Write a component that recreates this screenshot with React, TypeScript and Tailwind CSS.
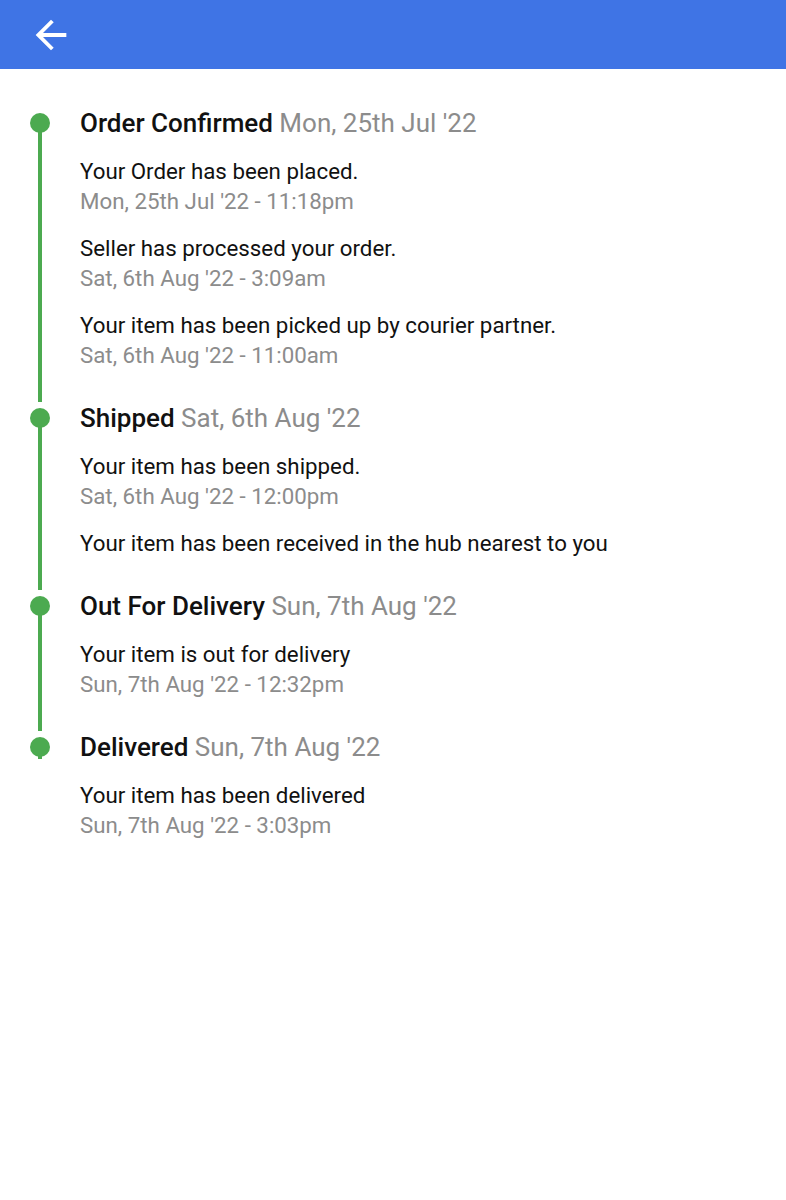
type Event = {
  text: string;
  time?: string;
};

type Stage = {
  title: string;
  date: string;
  events: Event[];
};

const stages: Stage[] = [
  {
    title: 'Order Confirmed',
    date: "Mon, 25th Jul '22",
    events: [
      { text: 'Your Order has been placed.', time: "Mon, 25th Jul '22 - 11:18pm" },
      { text: 'Seller has processed your order.', time: "Sat, 6th Aug '22 - 3:09am" },
      { text: 'Your item has been picked up by courier partner.', time: "Sat, 6th Aug '22 - 11:00am" },
    ],
  },
  {
    title: 'Shipped',
    date: "Sat, 6th Aug '22",
    events: [
      { text: 'Your item has been shipped.', time: "Sat, 6th Aug '22 - 12:00pm" },
      { text: 'Your item has been received in the hub nearest to you' },
    ],
  },
  {
    title: 'Out For Delivery',
    date: "Sun, 7th Aug '22",
    events: [{ text: 'Your item is out for delivery', time: "Sun, 7th Aug '22 - 12:32pm" }],
  },
  {
    title: 'Delivered',
    date: "Sun, 7th Aug '22",
    events: [{ text: 'Your item has been delivered', time: "Sun, 7th Aug '22 - 3:03pm" }],
  },
];

function BackArrow() {
  return (
    <svg width="46" height="46" viewBox="0 0 24 24" fill="#ffffff" aria-hidden>
      <path d="M20 11H7.83l5.59-5.59L12 4l-8 8 8 8 1.41-1.41L7.83 13H20v-2z" />
    </svg>
  );
}

export default function App() {
  return (
    <div className="min-h-[1200px] bg-white font-['Roboto',sans-serif] text-[#111]">
      <header className="flex h-[69px] items-center bg-[#3f74e5] pl-[28px]">
        <BackArrow />
      </header>

      <main className="pl-[30px] pt-[38px]">
        {stages.map((stage, i) => {
          const last = i === stages.length - 1;
          return (
            <section key={stage.title} className="flex">
              <div className="relative w-[50px] shrink-0">
                <div
                  className={`absolute left-[8px] top-[16px] w-[4px] bg-[#4caa50] ${last ? 'h-[12px]' : 'bottom-0'}`}
                />
                <div className="absolute left-0 top-[6px] h-[20px] w-[20px] rounded-full bg-[#4caa50]" />
              </div>
              <div className={last ? '' : 'pb-[32px]'}>
                <h2 className="text-[26px] leading-[32px]">
                  <span className="font-medium">{stage.title}</span>{' '}
                  <span className="text-[#8c8c8c]">{stage.date}</span>
                </h2>
                {stage.events.map((ev) => (
                  <div key={ev.text} className="mt-[17px] text-[22.3px] leading-[30px]">
                    <p>{ev.text}</p>
                    {ev.time && <p className="text-[#8c8c8c]">{ev.time}</p>}
                  </div>
                ))}
              </div>
            </section>
          );
        })}
      </main>
    </div>
  );
}
